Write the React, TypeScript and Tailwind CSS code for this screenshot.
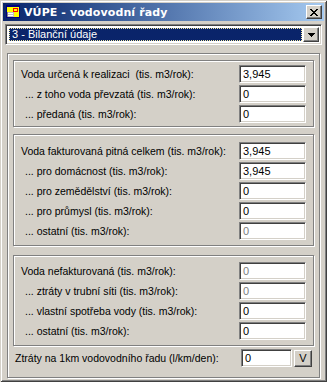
import React from 'react';

type Row = { label: string; value: string; indent?: boolean; disabled?: boolean };

const groups: { rows: Row[]; pad: string; mt: string }[] = [
  {
    pad: 'pt-[4px] pb-[3px]',
    mt: 'mt-0',
    rows: [
      { label: 'Voda určená k realizaci  (tis. m3/rok):', value: '3,945' },
      { label: '... z toho voda převzatá (tis. m3/rok):', value: '0', indent: true },
      { label: '... předaná (tis. m3/rok):', value: '0', indent: true },
    ],
  },
  {
    pad: 'pt-[7px] pb-[5px]',
    mt: 'mt-[7px]',
    rows: [
      { label: 'Voda fakturovaná pitná celkem (tis. m3/rok):', value: '3,945' },
      { label: '... pro domácnost (tis. m3/rok):', value: '3,945', indent: true },
      { label: '... pro zemědělství (tis. m3/rok):', value: '0', indent: true },
      { label: '... pro průmysl (tis. m3/rok):', value: '0', indent: true },
      { label: '... ostatní (tis. m3/rok):', value: '0', indent: true, disabled: true },
    ],
  },
  {
    pad: 'pt-[6px] pb-[5px]',
    mt: 'mt-[9px]',
    rows: [
      { label: 'Voda nefakturovaná (tis. m3/rok):', value: '0', disabled: true },
      { label: '... ztráty v trubní síti (tis. m3/rok):', value: '0', indent: true, disabled: true },
      { label: '... vlastní spotřeba vody (tis. m3/rok):', value: '0', indent: true },
      { label: '... ostatní (tis. m3/rok):', value: '0', indent: true },
    ],
  },
];

const sunken =
  'border border-t-[#808080] border-l-[#808080] border-r-white border-b-white shadow-[inset_1px_1px_0_#404040,inset_-1px_-1px_0_#d4d0c8]';
const raised =
  'border border-t-white border-l-white border-r-[#404040] border-b-[#404040] shadow-[inset_-1px_-1px_0_#808080]';
const etched = 'border border-[#808080] shadow-[inset_1px_1px_0_#fff,1px_1px_0_#fff]';

const Field: React.FC<{ value: string; disabled?: boolean; width: string }> = ({ value, disabled, width }) => (
  <div className={`${sunken} ${width} h-[18px] bg-white flex items-center pl-[3px] text-[11px] ${disabled ? 'text-[#808080]' : 'text-black'}`}>
    {value}
  </div>
);

const AppIcon = () => (
  <svg width="16" height="16" viewBox="0 0 16 16" shapeRendering="crispEdges">
    <rect x="1" y="1" width="14" height="13" fill="#000080" />
    <rect x="2" y="3" width="12" height="10" fill="#ffff00" />
    <rect x="8" y="4" width="5" height="4" fill="#ff0000" />
    <rect x="9" y="5" width="3" height="2" fill="#ffff00" />
    <rect x="2" y="8" width="7" height="5" fill="#c0c0c0" />
    <rect x="3" y="9" width="5" height="1" fill="#ffffff" />
    <rect x="3" y="11" width="5" height="1" fill="#ffffff" />
    <rect x="2" y="8" width="1" height="5" fill="#808080" />
  </svg>
);

export default function App() {
  return (
    <div className="w-[327px] h-[382px] bg-[#d4d0c8] p-[3px] flex flex-col text-[10.5px] leading-none text-black font-['Liberation_Sans',Arial,sans-serif] shadow-[inset_1px_1px_0_#d4d0c8,inset_-1px_-1px_0_#404040,inset_2px_2px_0_#fff,inset_-2px_-2px_0_#808080]">
      {/* Title bar */}
      <div className="h-[18px] flex items-center bg-linear-to-r from-[#0a246a] to-[#a6caf0] pl-[2px] pr-[2px]">
        <AppIcon />
        <span className="ml-[3px] text-white font-bold text-[11px] font-['DejaVu_Sans',sans-serif] tracking-[0.1px]">
          VÚPE - vodovodní řady
        </span>
        <div className={`ml-auto w-[16px] h-[14px] bg-[#d4d0c8] flex items-center justify-center ${raised}`}>
          <svg width="8" height="7" viewBox="0 0 8 7" shapeRendering="crispEdges">
            <path d="M0 0h2v1h-2zM6 0h2v1h-2zM1 1h2v1h-2zM5 1h2v1h-2zM2 2h4v1h-4zM3 3h2v1h-2zM2 4h4v1h-4zM1 5h2v1h-2zM5 5h2v1h-2zM0 6h2v1h-2zM6 6h2v1h-2z" fill="#000" />
          </svg>
        </div>
      </div>

      {/* Combobox */}
      <div className={`mt-[3px] mx-[2px] h-[21px] bg-white flex p-[2px] ${sunken}`}>
        <div className="flex-1 bg-[#0a246a] m-[1px] border border-dotted border-[#f5e9a0] flex items-center pl-[2px] text-white text-[11px]">
          3 - Bilanční údaje
        </div>
        <div className={`w-[16px] bg-[#d4d0c8] flex items-center justify-center ${raised}`}>
          <svg width="7" height="4" viewBox="0 0 7 4" shapeRendering="crispEdges">
            <path d="M0 0h7v1h-7zM1 1h5v1h-5zM2 2h3v1h-3zM3 3h1v1h-1z" fill="#000" />
          </svg>
        </div>
      </div>

      {/* Main panel */}
      <div className={`mt-[8px] mx-[4px] mb-[1px] flex-1 flex flex-col pt-[6px] px-[5px] ${etched}`}>
        {groups.map((g, gi) => (
          <div key={gi} className={`${etched} ${g.mt} ${g.pad} pl-[7px] pr-[7px] flex flex-col gap-[2px]`}>
            {g.rows.map((r, ri) => (
              <div key={ri} className="flex items-center h-[18px]">
                <span className={`flex-1 whitespace-pre ${r.indent ? 'pl-[4px]' : ''}`}>{r.label}</span>
                <Field value={r.value} disabled={r.disabled} width="w-[67px]" />
              </div>
            ))}
          </div>
        ))}

        <div className="mt-[3px] flex items-center h-[18px] pl-[2px] pr-[2px]">
          <span className="flex-1">Ztráty na 1km vodovodního řadu (l/km/den):</span>
          <Field value="0" width="w-[51px]" />
          <div className={`ml-[2px] w-[18px] h-[17px] bg-[#d4d0c8] flex items-center justify-center text-[11px] ${raised}`}>V</div>
        </div>
      </div>
    </div>
  );
}
